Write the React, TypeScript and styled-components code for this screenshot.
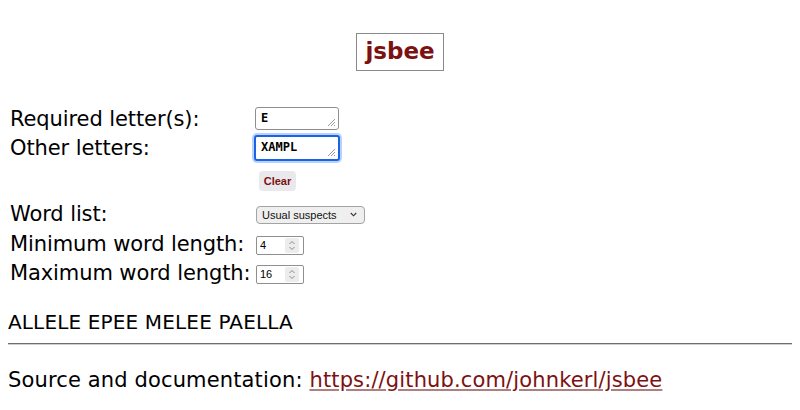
import React from 'react';
import styled, { createGlobalStyle } from 'styled-components';

const GlobalStyle = createGlobalStyle`
  body {
    margin: 8px;
    background: #ffffff;
    color: #000000;
    font-family: "DejaVu Sans", Verdana, sans-serif;
  }
`;

const Page = styled.div`
  display: flex;
  flex-direction: column;
`;

const TitleRow = styled.div`
  display: flex;
  justify-content: center;
  padding-top: 25px;
`;

const TitleBox = styled.div`
  border: 1px solid #8a8a8a;
  padding: 4px 8px 6px;
  font-family: "DejaVu Sans", Verdana, sans-serif;
  font-size: 23px;
  font-weight: bold;
  color: #7c1111;
  line-height: 26px;
`;

const FormGrid = styled.div`
  display: grid;
  grid-template-columns: 245px auto;
  grid-template-rows: 29px 29px 37px 31px 30px 28px;
  align-items: center;
  margin-top: 33px;
  padding-left: 2px;
`;

const Label = styled.div<{ lift?: number }>`
  font-size: 21px;
  line-height: 24px;
  letter-spacing: -0.1px;
  white-space: nowrap;
  margin-top: ${p => -(p.lift ?? 0) * 2}px;
`;

const Cell = styled.div<{ offset?: number }>`
  display: flex;
  align-items: center;
  padding-left: ${p => p.offset ?? 0}px;
`;

const LetterBox = styled.div<{ focused?: boolean }>`
  position: relative;
  width: ${p => (p.focused ? 86 : 84)}px;
  height: ${p => (p.focused ? 26 : 23)}px;
  box-sizing: border-box;
  border: ${p => (p.focused ? '2px solid #1a63e6' : '1px solid #8f8f8f')};
  border-radius: 3px;
  box-shadow: ${p => (p.focused ? '0 0 0 2px #b9d2fb' : 'none')};
  background: #fff;
  margin-left: ${p => (p.focused ? -1 : 0)}px;
`;

const LetterInput = styled.textarea`
  width: 100%;
  height: 100%;
  box-sizing: border-box;
  border: none;
  outline: none;
  resize: none;
  background: transparent;
  padding: 3px 5px;
  font-family: "DejaVu Sans Mono", Menlo, monospace;
  font-weight: bold;
  font-size: 12px;
  line-height: 15px;
  color: #000;
  overflow: hidden;
`;

const Grip = styled.svg`
  position: absolute;
  right: 2px;
  bottom: 2px;
  pointer-events: none;
`;

const ClearButton = styled.button`
  width: 37px;
  height: 20px;
  border: none;
  border-radius: 4px;
  background: #e9e8ed;
  color: #7c1111;
  font-family: "Liberation Sans", Arial, sans-serif;
  font-size: 11px;
  font-weight: bold;
  padding: 0;
`;

const SelectWrap = styled.div`
  position: relative;
  display: inline-flex;
`;

const Select = styled.select`
  appearance: none;
  width: 109px;
  height: 18px;
  box-sizing: border-box;
  border: 1px solid #a3a3a3;
  border-radius: 4px;
  background: #efefef;
  font-family: "Liberation Sans", Arial, sans-serif;
  font-size: 11px;
  color: #111;
  padding: 0 0 0 5px;
  outline: none;
`;

const Chevron = styled.svg`
  position: absolute;
  right: 8px;
  top: 6px;
  pointer-events: none;
`;

const NumberWrap = styled.div`
  position: relative;
  display: inline-flex;
  width: 48px;
  height: 19px;
  box-sizing: border-box;
  border: 1px solid #8f8f8f;
  border-radius: 2px;
  background: #fff;
`;

const NumberInput = styled.input`
  width: 28px;
  border: none;
  outline: none;
  background: transparent;
  padding: 0 0 0 3px;
  font-family: "Liberation Sans", Arial, sans-serif;
  font-size: 11px;
  color: #000;
`;

const Stepper = styled.svg`
  position: absolute;
  right: 4px;
  top: 1px;
`;

const Results = styled.div`
  margin-top: 22px;
  font-size: 20px;
  line-height: 24px;
  letter-spacing: 0.15px;
`;

const Rule = styled.hr`
  margin: 9px 0 0;
  border: none;
  border-top: 1px solid #6e6e6e;
  border-bottom: 1px solid #cfcfcf;
  height: 0;
`;

const Footer = styled.div`
  margin-top: 23px;
  font-size: 21px;
  line-height: 24px;
  letter-spacing: 0.14px;
`;

const Link = styled.a`
  color: #7c1111;
  text-decoration: underline;
  text-decoration-color: #b08080;
`;

const GripIcon = () => (
  <Grip width="9" height="9" viewBox="0 0 9 9">
    <path d="M8 1 L1 8 M8 4 L4 8 M8 7 L7 8" stroke="#9a9a9a" strokeWidth="1" fill="none" />
  </Grip>
);

const Letters: React.FC<{ value: string; focused?: boolean }> = ({ value, focused }) => (
  <LetterBox focused={focused}>
    <LetterInput defaultValue={value} spellCheck={false} />
    <GripIcon />
  </LetterBox>
);

const NumberField: React.FC<{ value: number }> = ({ value }) => (
  <NumberWrap>
    <NumberInput type="text" defaultValue={String(value)} />
    <Stepper width="14" height="15" viewBox="0 0 14 15">
      <rect x="0" y="0" width="14" height="15" rx="2" fill="#ececec" />
      <path d="M4.5 6 L7 3.5 L9.5 6" stroke="#8a8a8a" strokeWidth="1" fill="none" />
      <path d="M4.5 9 L7 11.5 L9.5 9" stroke="#8a8a8a" strokeWidth="1" fill="none" />
    </Stepper>
  </NumberWrap>
);

const App: React.FC = () => {
  return (
    <>
      <GlobalStyle />
      <Page>
        <TitleRow>
          <TitleBox>jsbee</TitleBox>
        </TitleRow>

        <FormGrid>
          <Label>Required letter(s):</Label>
          <Cell>
            <Letters value="E" />
          </Cell>

          <Label>Other letters:</Label>
          <Cell>
            <Letters value="XAMPL" focused />
          </Cell>

          <div />
          <Cell offset={4}>
            <ClearButton>Clear</ClearButton>
          </Cell>

          <Label lift={1}>Word list:</Label>
          <Cell offset={1}>
            <SelectWrap>
              <Select defaultValue="usual">
                <option value="usual">Usual suspects</option>
              </Select>
              <Chevron width="7" height="5" viewBox="0 0 7 5">
                <path d="M0.8 1 L3.5 3.8 L6.2 1" stroke="#333" strokeWidth="1.1" fill="none" />
              </Chevron>
            </SelectWrap>
          </Cell>

          <Label lift={1}>Minimum word length:</Label>
          <Cell offset={1}>
            <NumberField value={4} />
          </Cell>

          <Label lift={1}>Maximum word length:</Label>
          <Cell offset={1}>
            <NumberField value={16} />
          </Cell>
        </FormGrid>

        <Results>ALLELE EPEE MELEE PAELLA</Results>
        <Rule />
        <Footer>
          Source and documentation:{' '}
          <Link href="https://github.com/johnkerl/jsbee">https://github.com/johnkerl/jsbee</Link>
        </Footer>
      </Page>
    </>
  );
};

export default App;
